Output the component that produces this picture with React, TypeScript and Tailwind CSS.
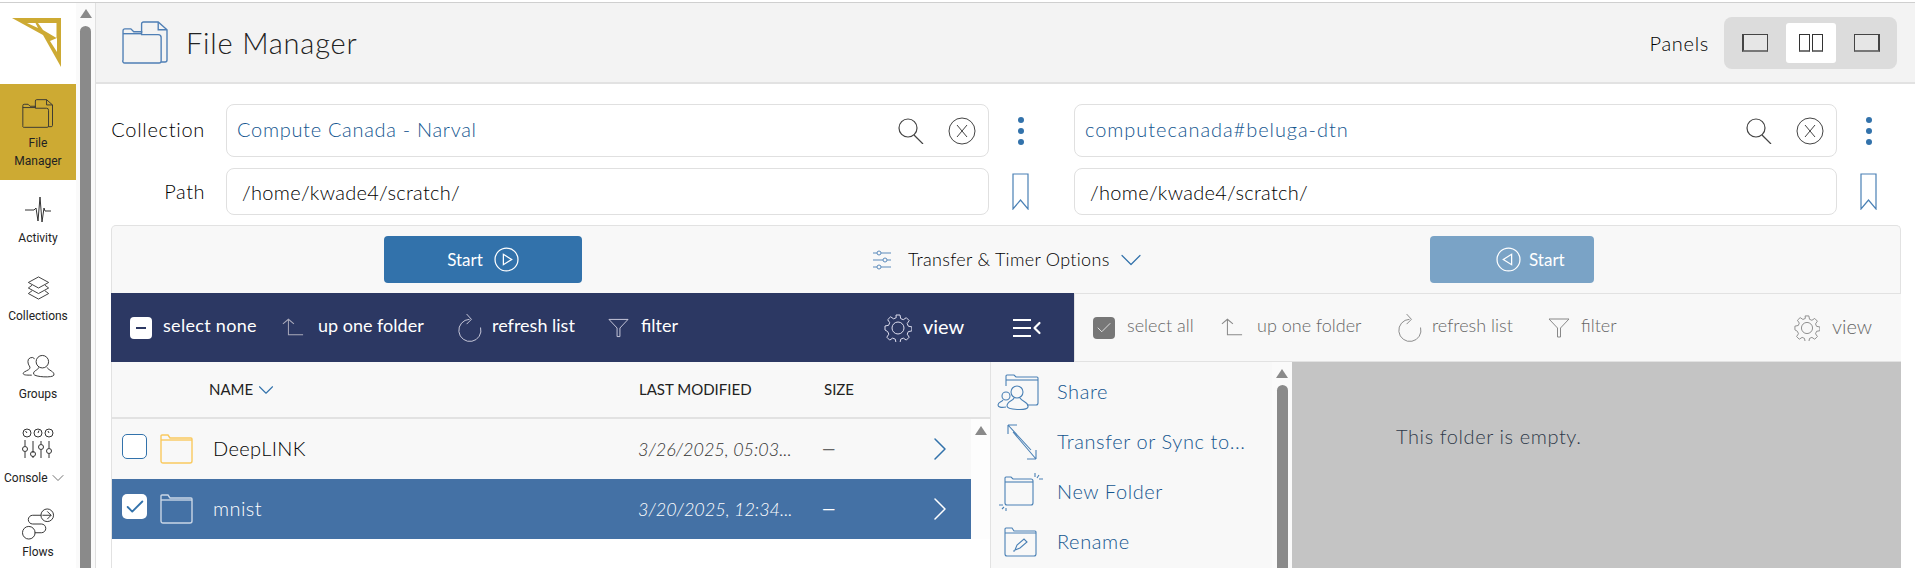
import type { ReactNode } from "react";
import { ChevronDown, ChevronLeft, ChevronRight, Check } from "lucide-react";

const sans = "font-['Lato','Open_Sans',sans-serif]";

const FolderDocIcon = ({ className }: { className: string }) => (
  <svg viewBox="0 0 48 44" fill="none" stroke="currentColor" strokeWidth="1.4" className={className}>
    <path d="M20 12V3a2 2 0 0 1 2-2h15l9 8v31a2 2 0 0 1-2 2h-4" />
    <path d="M37 1v8h9" />
    <path d="M1 40V10a2 2 0 0 1 2-2h6l3 3h8v3h17a3 3 0 0 1 3 3v24a2 2 0 0 1-2 2H3a2 2 0 0 1-2-3z" />
    <path d="M1 13h19" />
  </svg>
);

const PlainFolder = ({ className }: { className: string }) => (
  <svg viewBox="0 0 33 30" fill="none" stroke="currentColor" strokeWidth="1.4" className={className}>
    <path d="M1 5V2a1 1 0 0 1 1-1h6l2 3h21a1 1 0 0 1 1 1v22a2 2 0 0 1-2 2H3a2 2 0 0 1-2-2z" />
    <path d="M1 6h31" />
  </svg>
);

const UpIcon = ({ className }: { className: string }) => (
  <svg viewBox="0 0 24 20" fill="none" stroke="currentColor" strokeWidth="1.100" className={className}>
    <path d="M1 6l6-5 6 5M7 1v17h16" />
  </svg>
);

const RefreshIcon = ({ className }: { className: string }) => (
  <svg viewBox="0 0 26 30" fill="none" stroke="currentColor" strokeWidth="1" className={className}>
    <path d="M13 6.500A11.500 11.500 0 1 0 24.500 15" />
    <path d="M10 1l5 5.500-5 5" />
  </svg>
);

const FilterIcon = ({ className }: { className: string }) => (
  <svg viewBox="0 0 22 20" fill="none" stroke="currentColor" strokeWidth="1" className={className}>
    <path d="M1 1h20l-8.500 9v9h-3v-9z" />
  </svg>
);

const GearIcon = ({ className }: { className: string }) => (
  <svg viewBox="0 0 28 28" fill="none" stroke="currentColor" strokeWidth="1" className={className}>
    <circle cx="14" cy="14" r="6" />
    <path d="M12 1h4l.7 3.600 2.600 1.100 3-2 2.900 2.900-2 3 1.100 2.600 3.600.7v4l-3.600.7-1.100 2.600 2 3-2.900 2.900-3-2-2.600 1.100-.7 3.600h-4l-.7-3.600-2.600-1.100-3 2-2.900-2.900 2-3-1.100-2.600L1 16v-4l3.600-.7 1.100-2.600-2-3 2.900-2.900 3 2 2.600-1.100z" />
  </svg>
);

const SearchClear = () => (
  <div className="flex items-center gap-[24px] text-[#444]">
    <svg viewBox="0 0 26 26" fill="none" stroke="currentColor" strokeWidth="1.200" className="w-[26px] h-[26px]">
      <circle cx="10" cy="10" r="9" />
      <path d="M16 17l9 9" />
    </svg>
    <svg viewBox="0 0 28 28" fill="none" stroke="currentColor" strokeWidth="1" className="w-[28px] h-[28px]">
      <circle cx="14" cy="14" r="13" />
      <path d="M9 8l10 12M19 8L9 20" />
    </svg>
  </div>
);

const Kebab = () => (
  <div className="flex flex-col items-center gap-[5px] w-[8px]">
    <span className="w-[6px] h-[6px] rounded-full bg-[#3272ab]" />
    <span className="w-[6px] h-[6px] rounded-full bg-[#3272ab]" />
    <span className="w-[6px] h-[6px] rounded-full bg-[#3272ab]" />
  </div>
);

const Bookmark = () => (
  <svg viewBox="0 0 17 37" fill="none" stroke="#4a80b5" strokeWidth="1.200" className="w-[17px] h-[37px]">
    <path d="M1 1h15v35l-7.500-9L1 36z" />
  </svg>
);

const EndpointRow = ({ value, track }: { value: string; track: string }) => (
  <div className="flex items-center">
    <div className="w-[763px] h-[53px] rounded-[8px] border border-[#e0e0e0] bg-white flex items-center justify-between pl-[10px] pr-[12px]">
      <span className={`pb-[3px] text-[20px] font-light text-[#14568f] ${track}`}>{value}</span>
      <SearchClear />
    </div>
    <div className="ml-[28px]">
      <Kebab />
    </div>
  </div>
);

const PathRow = ({ value }: { value: string }) => (
  <div className="flex items-center">
    <div className="w-[763px] h-[47px] rounded-[8px] border border-[#e0e0e0] bg-white flex items-center pl-[15px]">
      <span className="text-[20px] font-light text-black tracking-[0.3px]">{value}</span>
    </div>
    <div className="ml-[23px]">
      <Bookmark />
    </div>
  </div>
);

const SideLabel = ({ children }: { children: ReactNode }) => (
  <span className="block text-[12px] leading-[18px] text-[#222] text-center font-['Roboto',sans-serif]">{children}</span>
);

const Sidebar = () => (
  <aside className="w-[76px] shrink-0 flex flex-col bg-white">
    <div className="h-[81px]">
      <svg viewBox="0 0 76 81" className="w-[76px] h-[81px]">
        <path
          fill="#cdaa33"
          fillRule="evenodd"
          d="M12 15H61V64L43 32ZM27 20H35.500L38 25ZM38 20H56.500V35L43 27ZM50 38L57 35V49Z"
        />
      </svg>
    </div>
    <div className="h-[96px] bg-[#cdaa33] flex flex-col items-center pt-[15px]">
      <FolderDocIcon className="w-[32px] h-[29px] text-[#333]" />
      <span className="mt-[6px] text-[12px] leading-[18px] text-[#222] text-center font-['Roboto',sans-serif]">File<br />Manager</span>
    </div>
    <div className="h-[80px] flex flex-col items-center pt-[17px]">
      <svg viewBox="0 0 26 26" fill="none" stroke="#333" strokeWidth="1" className="w-[26px] h-[26px]">
        <path d="M0 13h9l2-2 2 13 2-24 2 25 2-14 1 3h6" />
      </svg>
      <span className="mt-[6px]"><SideLabel>Activity</SideLabel></span>
    </div>
    <div className="h-[78px] flex flex-col items-center pt-[16px]">
      <svg viewBox="0 0 24 26" fill="none" stroke="#333" strokeWidth="1" className="w-[23px] h-[24px]">
        <path d="M12 1l11 6-11 6L1 7z" />
        <path d="M5 10l-4 3 11 6 11-6-4-3" />
        <path d="M5 16l-4 3 11 6 11-6-4-3" />
      </svg>
      <span className="mt-[7px]"><SideLabel>Collections</SideLabel></span>
    </div>
    <div className="h-[78px] flex flex-col items-center pt-[16px]">
      <svg viewBox="0 0 34 26" fill="none" stroke="#333" strokeWidth="1" className="w-[33px] h-[25px]">
        <circle cx="21" cy="8" r="6.500" />
        <path d="M17 14c0 3-6 3-5 7 1 3 20 4 21 1 1-4-6-5-7-8" />
        <path d="M13 5a4 4 0 0 0-7 3c0 4 3 5 2 7-1 2-6 3-7 5 0 2 3 2 9 2" />
      </svg>
      <span className="mt-[6px]"><SideLabel>Groups</SideLabel></span>
    </div>
    <div className="h-[78px] flex flex-col items-center pt-[12px]">
      <svg viewBox="0 0 32 30" fill="none" stroke="#333" strokeWidth="1" className="w-[32px] h-[30px]">
        <circle cx="5" cy="5" r="4" />
        <circle cx="16" cy="5" r="4" />
        <circle cx="27" cy="5" r="4" />
        <path d="M3.500 3l1.500 2M16 5l1-2.500M26 3l1 2" />
        <path d="M3 12v6M3 24v6M11 13v12M11 28v2M19 13v3M19 22v8M27 13v7M27 26v4" />
        <circle cx="3" cy="21" r="2.500" />
        <circle cx="11" cy="26" r="2.500" />
        <circle cx="19" cy="19" r="2.500" />
        <circle cx="27" cy="23" r="2.500" />
      </svg>
      <span className="mt-[10px] self-start ml-[4px] flex items-center">
        <SideLabel>Console</SideLabel>
        <ChevronDown className="w-[20px] h-[20px] text-[#444]" strokeWidth={0.9} />
      </span>
    </div>
    <div className="flex flex-col items-center pt-[14px]">
      <svg viewBox="0 0 34 32" fill="none" stroke="#333" strokeWidth="1" className="w-[33px] h-[32px]">
        <circle cx="26" cy="7" r="6.500" />
        <circle cx="7" cy="25" r="6.500" />
        <path d="M20 7H11a4.500 4.500 0 0 0 0 9h9a4.500 4.500 0 0 1 0 9h-7" />
        <path d="M26 3l4 4-4 4M21 7h9" />
      </svg>
      <span className="mt-[3px]"><SideLabel>Flows</SideLabel></span>
    </div>
  </aside>
);

const FileRow = ({ name, date, selected }: { name: string; date: string; selected?: boolean }) => (
  <div className={`flex items-center h-[60px] ${selected ? "bg-[#4471a5] text-white" : "bg-[#f8f8f8] text-black"}`}>
    <span className={`ml-[10px] mb-[5px] w-[25px] h-[25px] rounded-[5px] flex items-center justify-center ${selected ? "bg-white" : "border border-[#3272ab] bg-white"}`}>
      {selected && <Check className="w-[22px] h-[22px] text-[#3272ab]" strokeWidth={2} />}
    </span>
    <PlainFolder className={`ml-[13px] w-[33px] h-[30px] ${selected ? "text-[#c9d6e6]" : "text-[#f9c95f]"}`} />
    <span className="ml-[20px] w-[425px] text-[20px] font-light tracking-[0.4px] mb-[2px]">{name}</span>
    <span className={`w-[184px] text-[18px] italic font-light ${selected ? "text-white" : "text-[#333]"}`}>{date}</span>
    <span className={`w-[98px] text-[17px] ${selected ? "text-white" : "text-[#666]"}`}>—</span>
    <ChevronRight className={`w-[40px] h-[40px] ${selected ? "text-white" : "text-[#3272ab]"}`} strokeWidth={0.9} />
  </div>
);

const ToolItem = ({ icon, label, className, textClass }: { icon: ReactNode; label: string; className: string; textClass: string }) => (
  <div className={`flex items-center ${className}`}>
    {icon}
    <span className={`mb-[4px] whitespace-nowrap ${textClass}`}>{label}</span>
  </div>
);

const MenuItem = ({ icon, label }: { icon: ReactNode; label: string }) => (
  <div className="h-[50px] flex items-center">
    <div className="w-[66px] shrink-0">{icon}</div>
    <span className="mb-[2px] text-[20px] font-light tracking-[0.6px] text-[#14568f]">{label}</span>
  </div>
);

export default function App() {
  return (
    <div className={`w-[1915px] h-[568px] overflow-hidden bg-white border-t-2 border-white ${sans}`}>
      <div className="h-[566px] border-t border-[#cfcfcf] flex">
        <Sidebar />
        <div className="w-[19px] shrink-0 bg-[#fafafa] flex flex-col items-center pt-[6px]">
          <span className="w-0 h-0 border-x-[6px] border-x-transparent border-b-[9px] border-b-[#8a8a8a]" />
          <span className="mt-[8px] w-[11px] flex-1 rounded-t-[6px] bg-[#8a8a8a]" />
        </div>
        <main className="flex-1 min-w-0 border-l border-[#e0e0e0] flex flex-col">
          <header className="h-[81px] shrink-0 bg-[#f3f3f3] border-b-2 border-[#e2e2e2] flex items-center pl-[26px] pr-[18px]">
            <FolderDocIcon className="w-[47px] h-[43px] text-[#4f7fb5]" />
            <h1 className="ml-[17px] text-[29px] font-light text-[#222] tracking-[0.8px]">File Manager</h1>
            <span className="ml-auto mr-[15px] text-[20px] font-light text-black tracking-[0.7px]">Panels</span>
            <div className="w-[173px] h-[52px] rounded-[8px] bg-[#dcdcdc] flex items-center">
              <div className="w-[62px] flex justify-center">
                <span className="w-[26px] h-[18px] border border-[#444] border-l-2 border-b-2 border-b-[#777] bg-[#e6e6e6]" />
              </div>
              <div className="w-[50px] h-[40px] rounded-[3px] bg-white flex items-center justify-center gap-[2px]">
                <span className="w-[11px] h-[18px] border border-[#333] border-b-2 border-b-[#777]" />
                <span className="w-[11px] h-[18px] border border-[#333] border-b-2 border-b-[#777]" />
              </div>
              <div className="w-[61px] flex justify-center">
                <span className="w-[26px] h-[18px] border border-[#444] border-r-2 border-b-2 border-b-[#777] bg-[#e6e6e6]" />
              </div>
            </div>
          </header>

          <div className="pl-[15px] pr-[14px]">
            <div className="flex mt-[20px] items-center">
              <span className="w-[94px] shrink-0 pb-[4px] text-right text-[20px] font-light text-black tracking-[0.7px] whitespace-nowrap">Collection</span>
              <div className="flex-1 min-w-0 ml-[21px] grid grid-cols-[848px_1fr]">
                <EndpointRow value="Compute Canada - Narval" track="tracking-[0.7px]" />
                <EndpointRow value="computecanada#beluga-dtn" track="tracking-[0.95px]" />
              </div>
            </div>
            <div className="flex mt-[11px] items-center">
              <span className="w-[94px] shrink-0 pb-[2px] text-right text-[20px] font-light text-black tracking-[0.5px]">Path</span>
              <div className="flex-1 min-w-0 ml-[21px] grid grid-cols-[848px_1fr]">
                <PathRow value="/home/kwade4/scratch/" />
                <PathRow value="/home/kwade4/scratch/" />
              </div>
            </div>

            <div className="mt-[10px] border border-b-0 border-[#e2e2e2] rounded-t-[5px] bg-[#f8f8f8] h-[68px] flex items-center">
              <div className="ml-[272px] w-[198px] h-[47px] rounded-[4px] bg-[#3272ab] text-white text-[17px] flex items-center justify-center gap-[11px]">
                Start
                <svg viewBox="0 0 24 24" fill="none" stroke="currentColor" strokeWidth="1.200" className="w-[25px] h-[25px]">
                  <circle cx="12" cy="12" r="11" />
                  <path d="M9 7l8 5-8 5z" />
                </svg>
              </div>
              <svg viewBox="0 0 18 20" fill="none" stroke="#5a8abb" strokeWidth="1" className="ml-[291px] w-[18px] h-[20px]">
                <path d="M0 3h4M8 3h10M0 10h10M14 10h4M0 17h4M8 17h10" />
                <circle cx="6" cy="3" r="2" />
                <circle cx="12" cy="10" r="2" />
                <circle cx="6" cy="17" r="2" />
              </svg>
              <span className="ml-[17px] w-[200px] whitespace-nowrap text-[18px] font-light tracking-[0.3px] text-black">Transfer &amp; Timer Options</span>
              <ChevronDown className="ml-[5px] w-[36px] h-[36px] text-[#3272ab]" strokeWidth={0.8} />
              <div className="ml-[281px] w-[164px] h-[47px] rounded-[4px] bg-[#7aa3c6] text-white text-[17px] flex items-center pl-[66px] gap-[8px]">
                <svg viewBox="0 0 24 24" fill="none" stroke="currentColor" strokeWidth="1.200" className="w-[25px] h-[25px]">
                  <circle cx="12" cy="12" r="11" />
                  <path d="M15 7l-8 5 8 5z" />
                </svg>
                Start
              </div>
            </div>

            <div className="flex h-[69px]">
              <div className="w-[963px] bg-[#2c3863] text-white flex items-center text-[18px] pl-[19px]">
                <span className="w-[22px] h-[22px] rounded-[4px] bg-white flex items-center justify-center">
                  <span className="w-[10px] h-[2px] bg-[#2c3863]" />
                </span>
                <span className="ml-[11px] mb-[4px] w-[93px] whitespace-nowrap tracking-[0.3px]">select none</span>
                <ToolItem className="ml-[26px]" textClass="w-[107px]" label="up one folder" icon={<UpIcon className="w-[22px] h-[19px] mr-[14px] text-[#aab]" />} />
                <ToolItem className="ml-[32px]" textClass="w-[82px]" label="refresh list" icon={<RefreshIcon className="w-[25px] h-[29px] mr-[10px] text-[#ccd]" />} />
                <ToolItem className="ml-[34px]" textClass="w-[36px]" label="filter" icon={<FilterIcon className="w-[21px] h-[20px] mr-[12px] text-[#ccd]" />} />
                <ToolItem className="ml-[207px]" textClass="w-[41px] text-[20px]" label="view" icon={<GearIcon className="w-[28px] h-[28px] mr-[11px] text-[#dde]" />} />
                <div className="ml-[49px] flex items-center">
                  <div className="flex flex-col gap-[6px]">
                    <span className="block w-[18px] h-[2px] bg-white" />
                    <span className="block w-[18px] h-[2px] bg-white" />
                    <span className="block w-[18px] h-[2px] bg-white" />
                  </div>
                  <ChevronLeft className="-ml-[4px] w-[20px] h-[20px] text-white" strokeWidth={2.6} />
                </div>
              </div>
              <div className="flex-1 bg-[#f8f8f8] border-l border-[#e2e2e2] border-y border-y-[#e2e2e2] text-[#666] text-[18px] font-light flex items-center pl-[18px]">
                <span className="w-[22px] h-[22px] rounded-[4px] bg-[#777] flex items-center justify-center">
                  <Check className="w-[18px] h-[18px] text-white" strokeWidth={1} />
                </span>
                <span className="ml-[12px] mb-[4px] w-[68px] whitespace-nowrap">select all</span>
                <ToolItem className="ml-[26px]" textClass="w-[108px]" label="up one folder" icon={<UpIcon className="w-[22px] h-[19px] mr-[14px] text-[#888]" />} />
                <ToolItem className="ml-[32px]" textClass="w-[81px]" label="refresh list" icon={<RefreshIcon className="w-[25px] h-[29px] mr-[10px] text-[#888]" />} />
                <ToolItem className="ml-[35px]" textClass="w-[34px]" label="filter" icon={<FilterIcon className="w-[22px] h-[20px] mr-[11px] text-[#888]" />} />
                <ToolItem className="ml-[179px]" textClass="w-[41px] text-[20px]" label="view" icon={<GearIcon className="w-[26px] h-[26px] mr-[12px] text-[#888]" />} />
              </div>
            </div>

            <div className="flex border-l border-[#e2e2e2] h-[206px]">
              <div className="w-[879px] shrink-0 border-r border-[#e2e2e2]">
                <div className="h-[57px] bg-[#f8f8f8] border-b-2 border-[#e2e2e2] flex items-center text-[15px] text-[#222] uppercase">
                  <span className="ml-[97px] flex items-center w-[430px]">
                    Name
                    <ChevronDown className="w-[26px] h-[26px] text-[#3272ab]" strokeWidth={1} />
                  </span>
                  <span className="w-[185px]">Last Modified</span>
                  <span>Size</span>
                </div>
                <div className="flex">
                  <div className="w-[859px] shrink-0">
                    <FileRow name="DeepLINK" date="3/26/2025, 05:03..." />
                    <FileRow name="mnist" date="3/20/2025, 12:34..." selected />
                  </div>
                  <div className="flex-1 flex justify-center pt-[7px] bg-[#fdfdfd]">
                    <span className="w-0 h-0 border-x-[6px] border-x-transparent border-b-[9px] border-b-[#8a8a8a]" />
                  </div>
                </div>
              </div>
              <div className="w-[281px] shrink-0 bg-[#f8f8f8] pt-[5px] text-[#3272ab]">
                <MenuItem label="Share" icon={
                  <svg viewBox="0 0 42 37" fill="none" stroke="#4a80b5" strokeWidth="1.100" className="ml-[6px] w-[42px] h-[37px]">
                    <path d="M9 12V2a1 1 0 0 1 1-1h7l2 2h21a1 1 0 0 1 1 1v25a2 2 0 0 1-2 2h-9" />
                    <path d="M9 6h32" />
                    <circle cx="20" cy="18" r="6" />
                    <path d="M17 24c-1 3-7 3-7 8 0 4 20 5 21 1 1-5-6-5-8-9" />
                    <circle cx="9" cy="22" r="4" />
                    <path d="M6 26c-1 2-5 2-5 5 0 2 3 3 8 2" />
                  </svg>
                } />
                <MenuItem label="Transfer or Sync to..." icon={
                  <svg viewBox="0 0 30 36" fill="none" stroke="#4a80b5" strokeWidth="1.100" className="ml-[16px] w-[30px] h-[36px]">
                    <path d="M1 1l23 25M1 1v9M1 1h9M6 8l23 27M29 35v-9M29 35h-9" />
                  </svg>
                } />
                <MenuItem label="New Folder" icon={
                  <svg viewBox="0 0 46 40" fill="none" stroke="#4a80b5" strokeWidth="1.100" className="ml-[7px] w-[46px] h-[40px]">
                    <path d="M7 9V6a1 1 0 0 1 1-1h5l2 2h18a2 2 0 0 1 2 2v22a2 2 0 0 1-2 2H9a2 2 0 0 1-2-2z" />
                    <path d="M7 10h28" />
                    <path d="M37 1v4M41 3l-2 3M45 7h-4M1 33h4M4 37l2-2M8 39v-3" />
                  </svg>
                } />
                <MenuItem label="Rename" icon={
                  <svg viewBox="0 0 33 30" fill="none" stroke="#4a80b5" strokeWidth="1.100" className="ml-[13px] w-[33px] h-[30px]">
                    <path d="M1 5V2a1 1 0 0 1 1-1h6l2 3h21a1 1 0 0 1 1 1v22a2 2 0 0 1-2 2H3a2 2 0 0 1-2-2z" />
                    <path d="M1 6h31M11 23l2-5 7-6 3 3-7 6zM9 24h2" />
                  </svg>
                } />
              </div>
              <div className="w-[20px] shrink-0 bg-[#fafafa] pt-[7px] flex flex-col items-center">
                <span className="w-0 h-0 border-x-[6px] border-x-transparent border-b-[9px] border-b-[#8a8a8a]" />
                <span className="mt-[7px] w-[11px] flex-1 rounded-t-[6px] bg-[#8a8a8a]" />
              </div>
              <div className="flex-1 bg-[#c4c4c4] pt-[59px] pl-[104px] text-[20px] font-light tracking-[0.6px] text-[#2f3a4a]">
                This folder is empty.
              </div>
            </div>
          </div>
        </main>
      </div>
    </div>
  );
}
